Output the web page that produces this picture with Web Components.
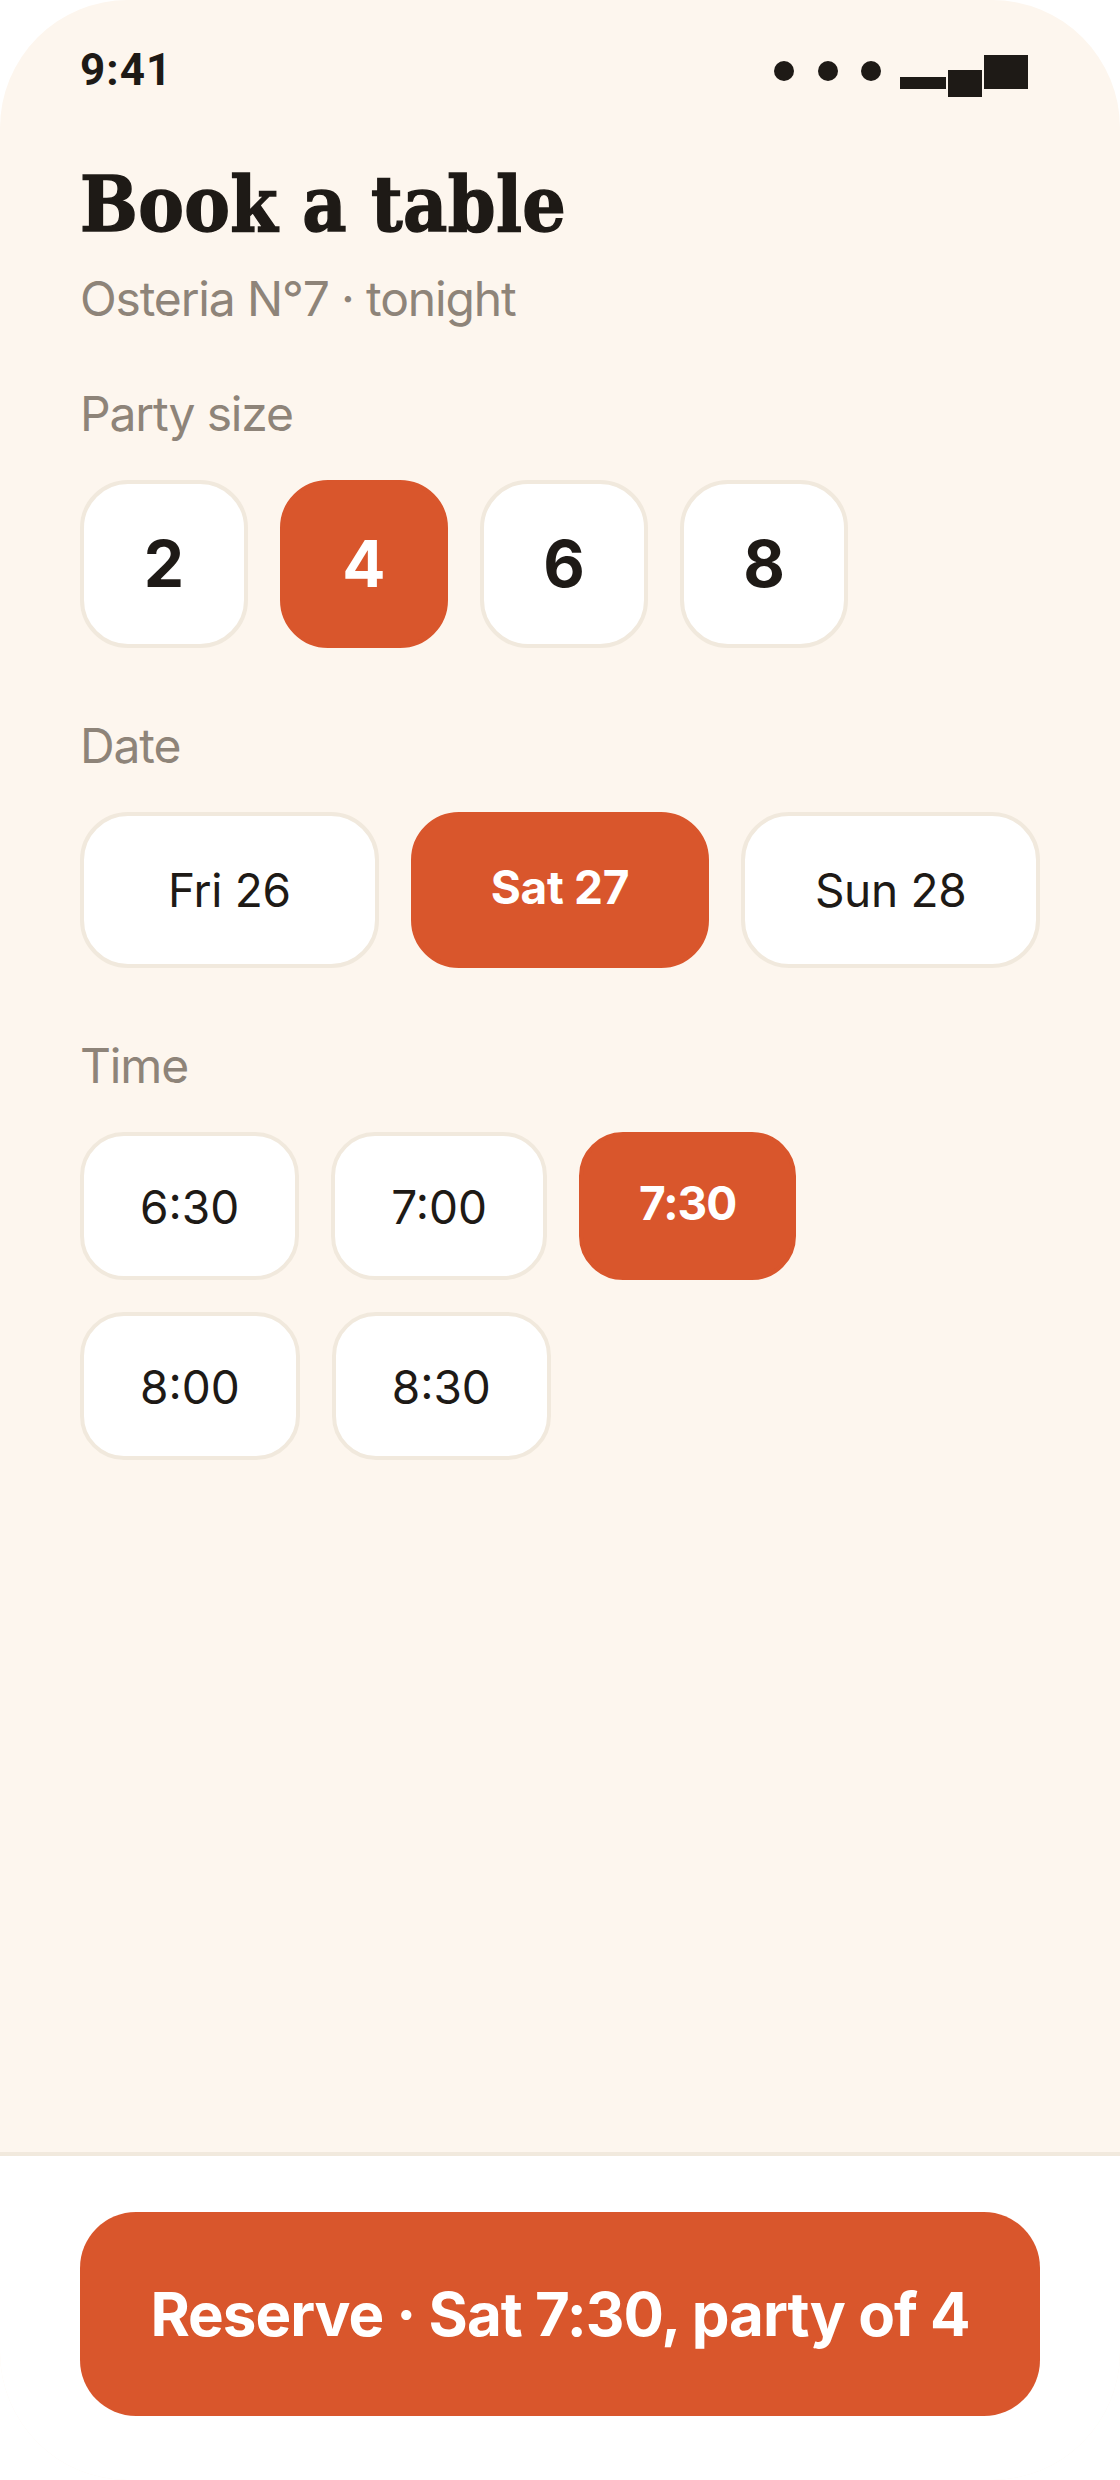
<!DOCTYPE html>
<html>
<head>
<meta charset="utf-8">
<title>Book a table</title>
<style>
html, body { margin: 0; background: #fff; }
body { font-family: "Inter", "Liberation Sans", sans-serif; color: #1e1a16; }
</style>
</head>
<body>
<template id="phone-template">
<style>
:host { display: flex; flex-direction: column; width: 1120px; height: 2480px; background: #fdf6ee; border-radius: 128px; overflow: hidden; }
.main { flex: 1; padding: 0 80px; }
</style>
<div class="main"><slot></slot></div>
<slot name="footer"></slot>
</template>

<template id="status-template">
<style>
:host { display: flex; justify-content: space-between; align-items: flex-start; height: 159px; padding-top: 48px; box-sizing: border-box; }
.time { font: 700 44px/44px "Roboto", sans-serif; letter-spacing: 1px; }
svg { display: block; margin-right: 12px; }
</style>
<span class="time">9:41</span>
<svg width="254" height="50" viewBox="0 0 254 50" fill="#1e1a16" aria-hidden="true">
  <circle cx="10" cy="23" r="10"/>
  <circle cx="54" cy="23" r="10"/>
  <circle cx="97" cy="23" r="10"/>
  <rect x="126" y="29" width="46" height="12"/>
  <rect x="174" y="22" width="34" height="27"/>
  <rect x="210" y="7" width="44" height="34"/>
</svg>
</template>

<template id="heading-template">
<style>
:host { display: block; }
/* the heading face is heavier than DejaVu's bold, so thicken it a touch */
h1 { margin: 0; font: 700 76px/92px "DejaVu Serif Condensed", "DejaVu Serif", serif; font-stretch: condensed; color: #1e1a16; letter-spacing: 0.4px; -webkit-text-stroke: 1.4px #1e1a16; }
p { margin: 18px 0 0; font: 400 48px/60px "Inter", sans-serif; color: #8e8479; letter-spacing: -1.15px; }
</style>
<h1><slot name="title"></slot></h1>
<p><slot name="sub"></slot></p>
</template>

<template id="section-template">
<style>
:host { display: block; margin-top: 68px; }
:host([mode="party"]) { margin-top: 55px; }
.label { font: 400 48px/60px "Inter", sans-serif; color: #8e8479; letter-spacing: -1.15px; margin-bottom: 36px; }
.row { display: flex; flex-wrap: wrap; gap: 32px; }
:host([mode="date"]) .row { display: grid; grid-template-columns: repeat(3, 1fr); }
:host([mode="time"]) .row { width: 760px; }
</style>
<div class="label"><slot name="label"></slot></div>
<div class="row"><slot></slot></div>
</template>

<template id="chip-template">
<style>
:host { display: flex; align-items: center; justify-content: center; box-sizing: border-box; background: #fff; border: 4px solid #f1e9dd; color: #1e1a16; font: 400 46px/56px "Inter", sans-serif; }
:host([size="party"]) { width: 168px; height: 168px; border-radius: 48px; font-size: 64px; font-weight: 700; }
:host([size="date"]) { height: 156px; border-radius: 48px; letter-spacing: -0.3px; }
:host([size="time"]) { height: 148px; padding: 2px 56px 0; border-radius: 44px; }
:host([selected]) { background: #d9562c; border-color: #d9562c; color: #fff; font-weight: 700; }
/* the filled date and time chips sit their label a little higher */
:host([size="date"][selected]) { padding-bottom: 6px; }
:host([size="time"][selected]) { padding-top: 0; padding-bottom: 6px; letter-spacing: -1px; }
</style>
<slot></slot>
</template>

<template id="footer-template">
<style>
:host { display: block; background: #fff; border-top: 4px solid #f1e9dd; padding: 56px 80px 64px; }
.cta { display: flex; align-items: center; justify-content: center; height: 204px; border-radius: 56px; background: #d9562c; color: #fff; font: 700 60px/72px "Inter", sans-serif; letter-spacing: -1px; }
</style>
<div class="cta"><slot></slot></div>
</template>

<booking-phone>
  <status-bar></status-bar>
  <booking-heading>
    <span slot="title">Book a table</span>
    <span slot="sub">Osteria N°7 · tonight</span>
  </booking-heading>
  <booking-section mode="party">
    <span slot="label">Party size</span>
    <booking-chip size="party">2</booking-chip>
    <booking-chip size="party" selected>4</booking-chip>
    <booking-chip size="party">6</booking-chip>
    <booking-chip size="party">8</booking-chip>
  </booking-section>
  <booking-section mode="date">
    <span slot="label">Date</span>
    <booking-chip size="date">Fri 26</booking-chip>
    <booking-chip size="date" selected>Sat 27</booking-chip>
    <booking-chip size="date">Sun 28</booking-chip>
  </booking-section>
  <booking-section mode="time">
    <span slot="label">Time</span>
    <booking-chip size="time">6:30</booking-chip>
    <booking-chip size="time">7:00</booking-chip>
    <booking-chip size="time" selected>7:30</booking-chip>
    <booking-chip size="time">8:00</booking-chip>
    <booking-chip size="time">8:30</booking-chip>
  </booking-section>
  <booking-footer slot="footer">Reserve · Sat 7:30, party of 4</booking-footer>
</booking-phone>
<script>
// every element just clones its template into an open shadow root
function register(tag, templateId) {
    customElements.define(tag, class extends HTMLElement {
        constructor() {
            super();
            const root = this.attachShadow({mode: 'open'});
            root.append(document.getElementById(templateId).content.cloneNode(true));
        }
    });
}
register('booking-phone', 'phone-template');
register('status-bar', 'status-template');
register('booking-heading', 'heading-template');
register('booking-section', 'section-template');
register('booking-chip', 'chip-template');
register('booking-footer', 'footer-template');
</script>
</body>
</html>
